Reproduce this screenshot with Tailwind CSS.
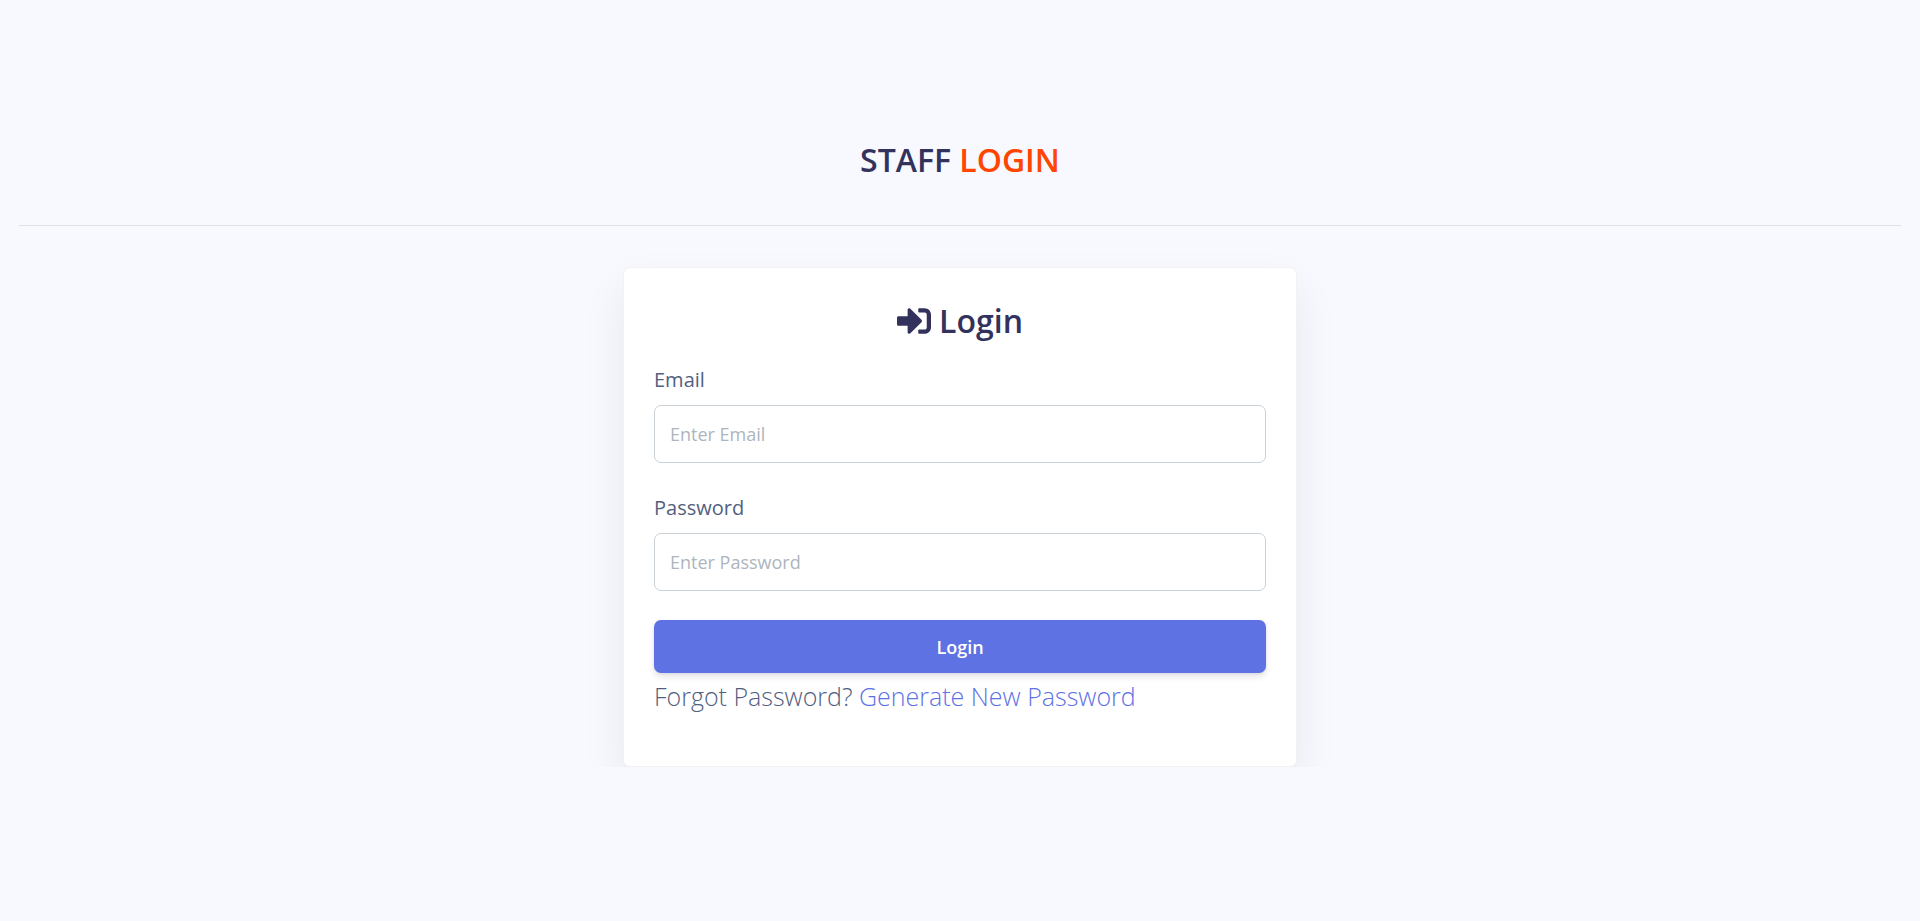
<!DOCTYPE html>
<html lang="en">
<head>
<meta charset="utf-8">
<meta name="viewport" content="width=device-width, initial-scale=1">
<title>Staff Login</title>
<script src="https://cdn.jsdelivr.net/npm/@tailwindcss/browser@4"></script>
</head>
<body class="min-h-screen bg-[#f8f9fe] font-['Open_Sans',sans-serif] text-[20px] leading-[30px] text-[#525f7f]">
<main>
  <header class="px-[19px] pt-[139px]">
    <h1 class="text-center text-[32px] leading-[42px] font-semibold text-[#32325d]">STAFF <span class="text-[#ff4500]">LOGIN</span></h1>
    <hr class="mt-11 border-t border-black/10">
  </header>
  <section class="overflow-hidden px-4 pt-[41px]">
    <div class="mx-auto w-full max-w-[674px] rounded-[7px] border border-black/5 bg-white bg-clip-border px-[30px] pt-[30px] pb-[51px] shadow-[0_20px_45px_rgba(0,0,0,0.07)]">
      <h2 class="flex items-center justify-center gap-2 text-[32px] leading-[46px] font-semibold text-[#32325d]">
        <svg class="size-[34px]" viewBox="0 0 512 512" fill="currentColor" aria-hidden="true"><path d="M416 448h-84c-6.600 0-12-5.400-12-12v-40c0-6.600 5.400-12 12-12h84c17.700 0 32-14.300 32-32V160c0-17.700-14.300-32-32-32h-84c-6.600 0-12-5.400-12-12V76c0-6.600 5.400-12 12-12h84c53 0 96 43 96 96v192c0 53-43 96-96 96zm-47-209L201 71c-15-15-41-4.500-41 17v96H24c-13.300 0-24 10.700-24 24v96c0 13.300 10.700 24 24 24h136v96c0 21.500 26 32 41 17l168-168c9.300-9.400 9.300-24.600 0-34z"/></svg>
        Login
      </h2>
      <form class="mt-[21px]">
        <label for="email" class="block">Email</label>
        <input id="email" type="email" placeholder="Enter Email" class="mt-2.5 block h-[58px] w-full rounded-[7px] border border-[#cad1d7] bg-white px-[15px] text-[18px] placeholder:text-[#adb5bd]">
        <label for="password" class="mt-[30px] block">Password</label>
        <input id="password" type="password" placeholder="Enter Password" class="mt-2.5 block h-[58px] w-full rounded-[7px] border border-[#cad1d7] bg-white px-[15px] text-[18px] placeholder:text-[#adb5bd]">
        <button type="submit" class="mt-[29px] block h-[53px] w-full rounded-[7px] bg-[#5e72e4] text-[18px] font-semibold text-white shadow-[0_4px_6px_rgba(50,50,93,0.11),0_1px_3px_rgba(0,0,0,0.08)]">Login</button>
      </form>
      <p class="mt-1 text-[25px] leading-[38px] font-light">Forgot Password? <a href="#" class="text-[#5e72e4]">Generate New Password</a></p>
    </div>
  </section>
</main>
</body>
</html>
